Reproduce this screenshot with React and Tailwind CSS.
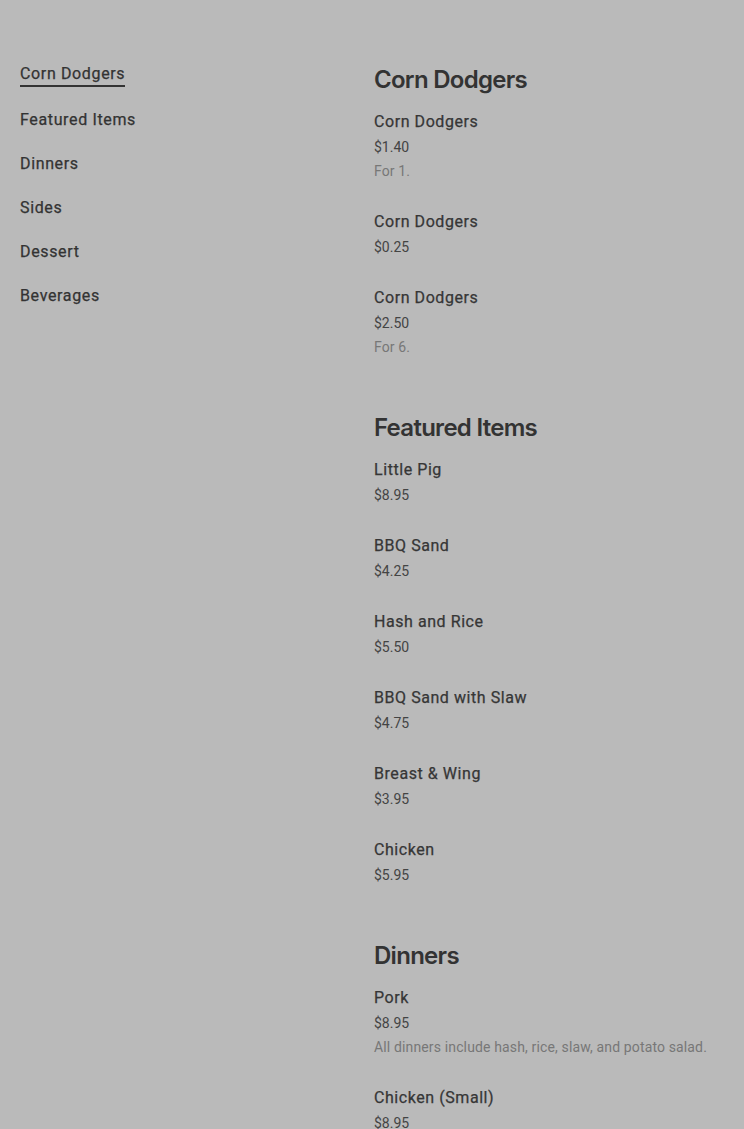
import React from "react";

const MENU = [
  {
    title: "Corn Dodgers",
    items: [
      { name: "Corn Dodgers", price: "$1.40", desc: "For 1." },
      { name: "Corn Dodgers", price: "$0.25" },
      { name: "Corn Dodgers", price: "$2.50", desc: "For 6." },
    ],
  },
  {
    title: "Featured Items",
    items: [
      { name: "Little Pig", price: "$8.95" },
      { name: "BBQ Sand", price: "$4.25" },
      { name: "Hash and Rice", price: "$5.50" },
      { name: "BBQ Sand with Slaw", price: "$4.75" },
      { name: "Breast & Wing", price: "$3.95" },
      { name: "Chicken", price: "$5.95" },
    ],
  },
  {
    title: "Dinners",
    items: [
      { name: "Pork", price: "$8.95", desc: "All dinners include hash, rice, slaw, and potato salad." },
      { name: "Chicken (Small)", price: "$8.95" },
    ],
  },
];

const NAV = ["Corn Dodgers", "Featured Items", "Dinners", "Sides", "Dessert", "Beverages"];

export default function App() {
  return (
    <div className="min-h-screen bg-[#bababa] px-5 pt-[63px] font-['Roboto',sans-serif]">
      <div className="flex">
        {/* Category nav */}
        <nav className="w-[354px] flex-shrink-0">
          <ul className="flex flex-col items-start gap-[22px]">
            {NAV.map((n, i) => (
              <li
                key={n}
                className={`text-base leading-[22px] tracking-[0.04em] text-[#333] [-webkit-text-stroke:0.25px_#333] ${i === 0 ? "border-b-2 border-[#333]" : ""}`}
              >
                {n}
              </li>
            ))}
          </ul>
        </nav>

        {/* Menu sections */}
        <main className="flex-1 min-w-0">
          {MENU.map((sec) => (
            <section key={sec.title} className="pb-[25px]">
              <h2 className="pt-[1px] text-2xl leading-8 font-semibold tracking-[-0.03em] text-[#333] font-['Inter',sans-serif] mb-[14px]">
                {sec.title}
              </h2>
              {sec.items.map((it, i) => (
                <div key={i} className="pb-[27px]">
                  <p className="text-base leading-6 tracking-[0.035em] text-[#363636] [-webkit-text-stroke:0.25px_#363636]">{it.name}</p>
                  <p className="mt-px text-sm leading-6 text-[#444]">{it.price}</p>
                  {it.desc && <p className="text-sm leading-6 tracking-[0.01em] text-[#777]">{it.desc}</p>}
                </div>
              ))}
            </section>
          ))}
        </main>
      </div>
    </div>
  );
}
